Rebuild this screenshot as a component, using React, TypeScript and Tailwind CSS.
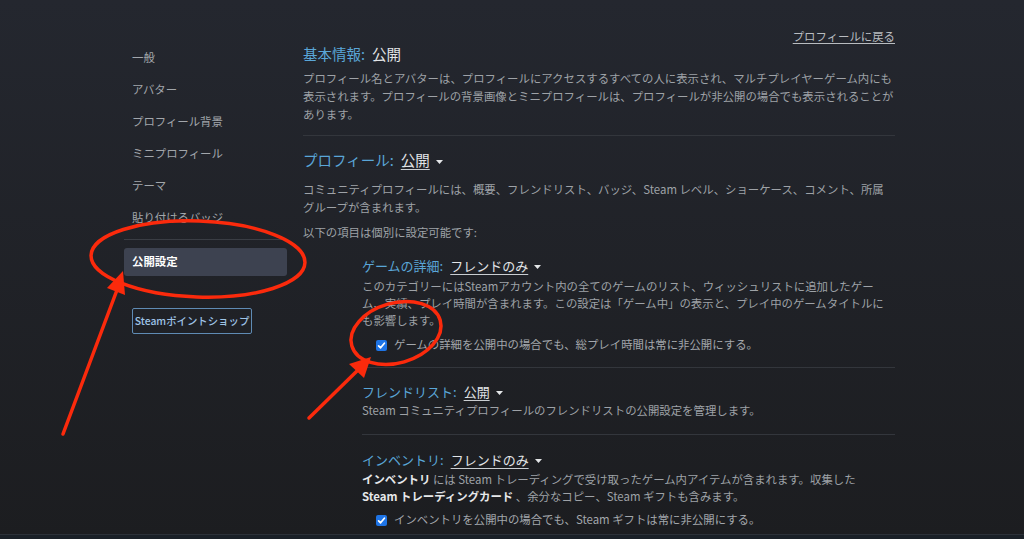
import type { ReactNode } from 'react';

const sideItems = ['一般', 'アバター', 'プロフィール背景', 'ミニプロフィール', 'テーマ', '貼り付けるバッジ'];

function Caret() {
  return (
    <svg width="7" height="4" viewBox="0 0 7 4" className="ml-[6px] inline-block align-middle">
      <path d="M0 0h7L3.5 4z" fill="#e4e6e8" />
    </svg>
  );
}

function Heading({ label, value, dropdown, size }: { label: string; value: string; dropdown?: boolean; size: 'lg' | 'sm' }) {
  return (
    <h3 className={size === 'lg' ? 'text-[14.5px] leading-5' : 'text-[13px] leading-5'}>
      <span className="text-[#5aa6d8]">{label}</span>
      <span className={dropdown ? 'ml-[7px] text-[#e2e5e8] underline underline-offset-[3px] decoration-[#c9cdd1]' : 'ml-[7px] text-[#e2e5e8]'}>{value}</span>
      {dropdown && <Caret />}
    </h3>
  );
}

function Check({ children }: { children: ReactNode }) {
  return (
    <div className="flex h-5 items-center pl-[14px] text-[11.4px] text-[#a3a7ac]">
      <span className="mr-[7px] flex h-[11px] w-[11px] items-center justify-center rounded-[2px] bg-[#1e74e6]">
        <svg width="9" height="9" viewBox="0 0 9 9">
          <path d="M1.6 4.8l2 2 3.8-4.6" fill="none" stroke="#fff" strokeWidth="1.7" strokeLinecap="round" strokeLinejoin="round" />
        </svg>
      </span>
      {children}
    </div>
  );
}

function Annotations() {
  return (
    <svg className="pointer-events-none absolute left-0 top-0" width="1024" height="539" viewBox="0 0 1024 539">
      <g fill="none" stroke="#fb2a0c" strokeWidth="3.5" strokeLinecap="round">
        <ellipse cx="198" cy="259" rx="107" ry="38" transform="rotate(2 198 259)" />
        <ellipse cx="396" cy="333" rx="46" ry="30" transform="rotate(-16 396 333)" />
        <line x1="63" y1="434" x2="117" y2="290" />
        <line x1="309" y1="418" x2="358" y2="370" />
      </g>
      <g fill="#fb2a0c">
        <polygon points="123,271 125,295 107,288" />
        <polygon points="371,357 364,378 349,364" />
      </g>
    </svg>
  );
}

export default function App() {
  return (
    <div className="relative h-[539px] overflow-hidden bg-gradient-to-b from-[#24272f] to-[#1c1d20] font-['Noto_Sans_CJK_JP','Noto_Sans',sans-serif]">
      <div className="flex h-[534px] gap-4 pl-[124px]">
        <aside className="w-[163px] shrink-0 pt-[42px]">
          {sideItems.map((item) => (
            <div key={item} className="flex h-8 items-center px-2 text-[11.4px] text-[#a2a6ab]">
              {item}
            </div>
          ))}
          <div className="mt-[5px] h-px bg-[#3a3d44]" />
          <div className="mt-2 flex h-7 items-center rounded-[3px] bg-[#3d4250] px-2 text-[11.4px] font-bold text-white">
            公開設定
          </div>
          <button className="ml-2 mt-8 h-[26px] w-[120px] whitespace-nowrap rounded-[2px] border border-[#5f8bb4] px-0 text-[10.4px] font-medium text-[#9ec3e6]">
            Steamポイントショップ
          </button>
        </aside>

        <main className="w-[592px] shrink-0 pt-[28px]">
          <div className="flex h-4 justify-end">
            <a className="text-[11.4px] leading-4 text-[#b8bcc0] underline underline-offset-2">プロフィールに戻る</a>
          </div>

          <Heading label="基本情報:" value="公開" size="lg" />
          <p className="mt-[5px] whitespace-nowrap text-[11.4px] leading-[18px] text-[#9ea2a7]">
            プロフィール名とアバターは、プロフィールにアクセスするすべての人に表示され、マルチプレイヤーゲーム内にも
            <br />
            表示されます。プロフィールの背景画像とミニプロフィールは、プロフィールが非公開の場合でも表示されることが
            <br />
            あります。
          </p>
          <div className="mt-3 h-px bg-[#33363c]" />

          <div className="mt-[14px]">
            <Heading label="プロフィール:" value="公開" dropdown size="lg" />
          </div>
          <p className="mt-[10px] whitespace-nowrap text-[11.4px] leading-[18px] text-[#9ea2a7]">
            コミュニティプロフィールには、概要、フレンドリスト、バッジ、Steam レベル、ショーケース、コメント、所属
            <br />
            グループが含まれます。
          </p>
          <p className="mt-[7px] text-[11.4px] leading-[18px] text-[#9ea2a7]">以下の項目は個別に設定可能です:</p>

          <div className="ml-[59px]">
            <div className="mt-[15px]">
              <Heading label="ゲームの詳細:" value="フレンドのみ" dropdown size="sm" />
            </div>
            <p className="mt-[2px] whitespace-nowrap text-[11.4px] leading-[17px] text-[#9ea2a7]">
              このカテゴリーにはSteamアカウント内の全てのゲームのリスト、ウィッシュリストに追加したゲー
              <br />
              ム、実績、プレイ時間が含まれます。この設定は「ゲーム中」の表示と、プレイ中のゲームタイトルに
              <br />
              も影響します。
            </p>
            <div className="mt-[6px]">
              <Check>ゲームの詳細を公開中の場合でも、総プレイ時間は常に非公開にする。</Check>
            </div>
            <div className="mt-3 h-px bg-[#33363c]" />

            <div className="mt-[14px]">
              <Heading label="フレンドリスト:" value="公開" dropdown size="sm" />
            </div>
            <p className="text-[11.4px] leading-[17px] text-[#9ea2a7]">
              Steam コミュニティプロフィールのフレンドリストの公開設定を管理します。
            </p>
            <div className="mt-[15px] h-px bg-[#33363c]" />

            <div className="mt-[15px]">
              <Heading label="インベントリ:" value="フレンドのみ" dropdown size="sm" />
            </div>
            <p className="mt-[1px] whitespace-nowrap text-[11.4px] leading-[17px] text-[#9ea2a7]">
              <b className="font-bold text-[#e6e8ea]">インベントリ</b> には Steam トレーディングで受け取ったゲーム内アイテムが含まれます。収集した
              <br />
              <b className="font-bold text-[#e6e8ea]">Steam トレーディングカード</b> 、余分なコピー、Steam ギフトも含みます。
            </p>
            <div className="mt-[5px]">
              <Check>インベントリを公開中の場合でも、Steam ギフトは常に非公開にする。</Check>
            </div>
          </div>
        </main>
      </div>
      <div className="h-[5px] border-t border-[#2c3138] bg-[#1a2027]" />
      <Annotations />
    </div>
  );
}
